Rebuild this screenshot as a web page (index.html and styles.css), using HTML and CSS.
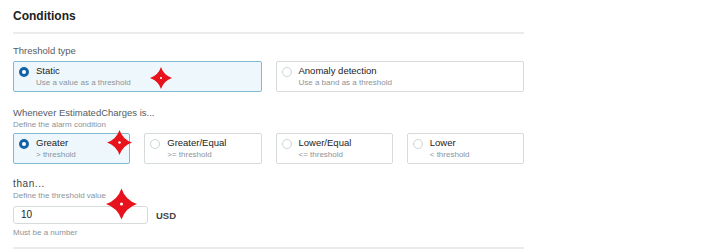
FILE: index.html
```html
<!DOCTYPE html>
<html lang="en">

<head>
    <meta charset="UTF-8">
    <title>Conditions</title>
    <link rel="stylesheet" href="styles.css">
</head>

<body>
    <div class="panel">
        <h2>Conditions</h2>
        <div class="divider"></div>

        <div class="field-label">Threshold type</div>
        <div class="options two">
            <div class="option selected">
                <span class="radio"></span>
                <div>
                    <div class="option-title">Static</div>
                    <div class="option-desc">Use a value as a threshold</div>
                </div>
            </div>
            <div class="option">
                <span class="radio"></span>
                <div>
                    <div class="option-title">Anomaly detection</div>
                    <div class="option-desc">Use a band as a threshold</div>
                </div>
            </div>
        </div>

        <div class="field-label spaced">Whenever EstimatedCharges is...</div>
        <div class="field-desc">Define the alarm condition</div>
        <div class="options four">
            <div class="option selected">
                <span class="radio"></span>
                <div>
                    <div class="option-title">Greater</div>
                    <div class="option-desc">&gt; threshold</div>
                </div>
            </div>
            <div class="option">
                <span class="radio"></span>
                <div>
                    <div class="option-title">Greater/Equal</div>
                    <div class="option-desc">&gt;= threshold</div>
                </div>
            </div>
            <div class="option">
                <span class="radio"></span>
                <div>
                    <div class="option-title">Lower/Equal</div>
                    <div class="option-desc">&lt;= threshold</div>
                </div>
            </div>
            <div class="option">
                <span class="radio"></span>
                <div>
                    <div class="option-title">Lower</div>
                    <div class="option-desc">&lt; threshold</div>
                </div>
            </div>
        </div>

        <div class="field-label than">than...</div>
        <div class="field-desc">Define the threshold value</div>
        <div class="value-row">
            <div class="value-input">10</div>
            <span class="unit">USD</span>
        </div>
        <div class="field-hint">Must be a number</div>
        <div class="divider bottom"></div>
    </div>

    <!-- annotation marks -->
    <svg class="mark mark-1" viewBox="0 0 24 24"><path d="M12 0Q15 9 24 12Q15 15 12 24Q9 15 0 12Q9 9 12 0Z"/><circle cx="12" cy="12" r="1.2"/></svg>
    <svg class="mark mark-2" viewBox="0 0 24 24"><path d="M12 0Q15 9 24 12Q15 15 12 24Q9 15 0 12Q9 9 12 0Z"/><circle cx="12" cy="12" r="1.2"/></svg>
    <svg class="mark mark-3" viewBox="0 0 24 24"><path d="M12 0Q15 9 24 12Q15 15 12 24Q9 15 0 12Q9 9 12 0Z"/><circle cx="12" cy="12" r="1.2"/></svg>
</body>

</html>
```

FILE: styles.css
```css
body {
    font-family: 'Liberation Sans', Arial, sans-serif;
    margin: 0;
    padding: 0;
    color: #16191f;
    background-color: #fff;
    position: relative;
}

.panel {
    width: 511px;
    padding-left: 13px;
}

h2 {
    font-size: 12px;
    font-weight: bold;
    line-height: 17px;
    margin: 0;
    padding-top: 8px;
    color: #222;
}

.divider {
    height: 2px;
    background-color: #e9ebed;
    margin-top: 7px;
}

.divider.bottom {
    margin-top: 9px;
}

.field-label {
    font-size: 9.5px;
    line-height: 14px;
    color: #545b64;
    margin-top: 10px;
}

.field-label.spaced {
    margin-top: 14px;
}

.field-label.than {
    margin-top: 13px;
    font-size: 10px;
    letter-spacing: 0.6px;
    color: #444;
}

.field-desc {
    font-size: 8px;
    line-height: 10px;
    color: #8c9399;
}

.field-hint {
    font-size: 8px;
    line-height: 10px;
    color: #8c9399;
    margin-top: 4px;
}

.options {
    display: grid;
    gap: 14px;
    margin-top: 3px;
}

.options.two {
    grid-template-columns: 1fr 1fr;
}

.options.four {
    grid-template-columns: repeat(4, 1fr);
}

.option {
    display: flex;
    align-items: flex-start;
    height: 31px;
    box-sizing: border-box;
    border: 1px solid #d5dbdb;
    border-radius: 2px;
    padding: 2px 8px 3px 5px;
}

.option.selected {
    background-color: #eef8fc;
    border-color: #7fbcd4;
}

.radio {
    width: 10px;
    height: 10px;
    box-sizing: border-box;
    border: 1px solid #cfd3d6;
    border-radius: 50%;
    background-color: #fff;
    margin-top: 3px;
    margin-right: 7px;
    flex-shrink: 0;
}

.selected .radio {
    border: 3px solid #1462a8;
}

.option-title {
    font-size: 9.5px;
    line-height: 13px;
    color: #222;
}

.option-desc {
    font-size: 8px;
    line-height: 11px;
    color: #8c9399;
}

.value-row {
    display: flex;
    align-items: center;
    margin-top: 5px;
}

.value-input {
    width: 135px;
    height: 18px;
    box-sizing: border-box;
    border: 1px solid #d5dbdb;
    border-radius: 3px;
    font-size: 10px;
    line-height: 16px;
    padding-left: 7px;
    color: #222;
}

.unit {
    font-size: 9.5px;
    font-weight: bold;
    color: #444;
    margin-left: 8px;
}

.mark {
    position: absolute;
    fill: #e8121c;
}

.mark circle {
    fill: #fff;
}

.mark-1 {
    left: 149px;
    top: 67px;
    width: 24px;
    height: 22px;
}

.mark-2 {
    left: 107px;
    top: 130px;
    width: 25px;
    height: 25px;
}

.mark-3 {
    left: 106px;
    top: 186px;
    width: 31px;
    height: 36px;
}
```
